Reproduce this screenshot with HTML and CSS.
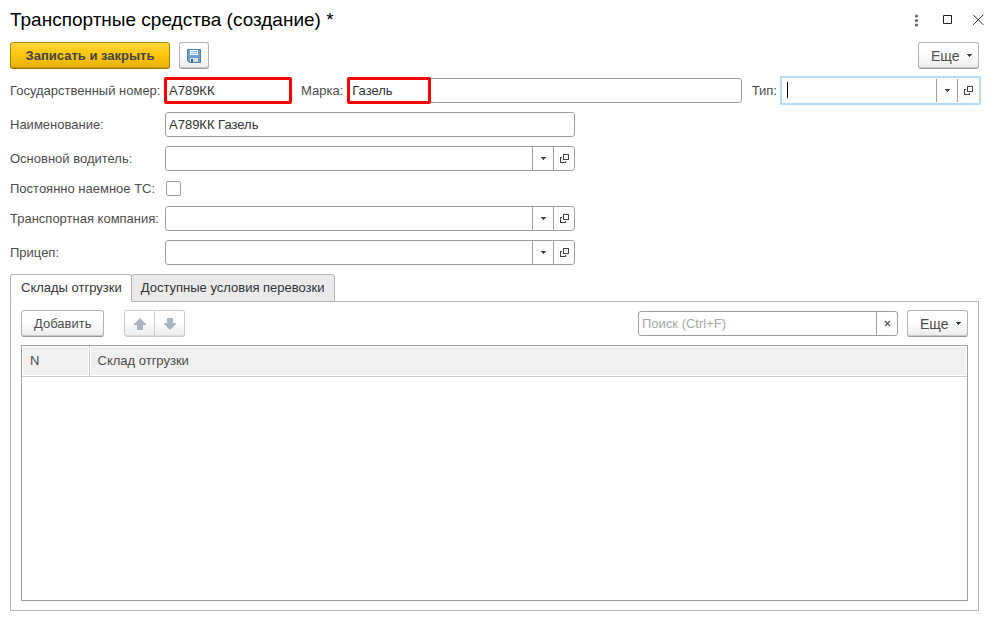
FILE: index.html
```html
<!DOCTYPE html>
<html lang="ru">
<head>
<meta charset="utf-8">
<meta name="viewport" content="width=device-width, initial-scale=1">
<title>Транспортные средства (создание)</title>
<link rel="stylesheet" href="styles.css">
</head>
<body>
<svg class="sprite" aria-hidden="true">
  <symbol id="caret" viewBox="0 0 5 3"><path d="M0 0h5v1H4v1H3v1H2V2H1V1H0z"/></symbol>
  <symbol id="open" viewBox="0 0 9 9"><path d="M3 0h6v6H3zM4 1v4h4V1zM0 3h2v1H1v4h4V7h1v2H0z" fill-rule="evenodd"/></symbol>
</svg>
<header class="titlebar">
  <h1 class="title">Транспортные средства (создание) *</h1>
  <div class="window-controls">
    <button class="window-button" type="button" aria-label="Меню"><svg width="15" height="15" viewBox="0 0 15 15"><g class="dots"><circle cx="7.5" cy="3" r="1.6"/><circle cx="7.5" cy="7.5" r="1.6"/><circle cx="7.5" cy="12" r="1.6"/></g></svg></button>
    <button class="window-button" type="button" aria-label="Развернуть"><svg width="15" height="15" viewBox="0 0 15 15"><path d="M3.5 2.5h8v8h-8z" fill="none" stroke="#222"/></svg></button>
    <button class="window-button" type="button" aria-label="Закрыть"><svg width="15" height="15" viewBox="0 0 15 15"><path d="M2.500 2l9.500 9.500M12 2l-9.500 9.500" fill="none" stroke="#333" stroke-linecap="square"/></svg></button>
  </div>
</header>
<main class="content">
  <div class="toolbar">
    <button class="button primary" type="button">Записать и закрыть</button>
    <button class="button icon-button" type="button" aria-label="Записать"><svg width="14" height="14" viewBox="0 0 14 14"><path d="M.5.5h13v13h-11l-2-2z" fill="#6f9fd0" stroke="#4f7dac"/><path d="M3 1h8v5H3z" fill="#fff"/><path d="M4 2.5h6M4 4.5h6" stroke="#8fb2d2"/><path d="M3 9h8v4H3z" fill="#d5dde0"/><path d="M4 10h2v3H4z" fill="#35608c"/></svg></button>
    <button class="button more push" type="button">Еще<svg width="5" height="3"><use href="#caret"/></svg></button>
  </div>
  <form class="form">
    <div class="row">
      <label class="label" for="number">Государственный номер:</label>
      <div class="field number marked"><input id="number" type="text" value="А789КК"></div>
      <label class="inline-label" for="brand">Марка:</label>
      <div class="field brand marked"><input id="brand" type="text" value="Газель"></div>
      <label class="inline-label" for="type">Тип:</label>
      <div class="field type focused"><input id="type" type="text"><button type="button" aria-label="Выбрать"><svg width="5" height="3"><use href="#caret"/></svg></button><button type="button" aria-label="Открыть"><svg width="9" height="9"><use href="#open"/></svg></button></div>
    </div>
    <div class="row">
      <label class="label" for="name">Наименование:</label>
      <div class="field regular"><input id="name" type="text" value="А789КК Газель"></div>
    </div>
    <div class="row">
      <label class="label" for="driver">Основной водитель:</label>
      <div class="field regular"><input id="driver" type="text"><button type="button" aria-label="Выбрать"><svg width="5" height="3"><use href="#caret"/></svg></button><button type="button" aria-label="Открыть"><svg width="9" height="9"><use href="#open"/></svg></button></div>
    </div>
    <div class="row">
      <label class="label" for="hired">Постоянно наемное ТС:</label>
      <input class="checkbox" id="hired" type="checkbox">
    </div>
    <div class="row">
      <label class="label" for="company">Транспортная компания:</label>
      <div class="field regular"><input id="company" type="text"><button type="button" aria-label="Выбрать"><svg width="5" height="3"><use href="#caret"/></svg></button><button type="button" aria-label="Открыть"><svg width="9" height="9"><use href="#open"/></svg></button></div>
    </div>
    <div class="row">
      <label class="label" for="trailer">Прицеп:</label>
      <div class="field regular"><input id="trailer" type="text"><button type="button" aria-label="Выбрать"><svg width="5" height="3"><use href="#caret"/></svg></button><button type="button" aria-label="Открыть"><svg width="9" height="9"><use href="#open"/></svg></button></div>
    </div>
  </form>
  <div class="tabs" role="tablist">
    <button class="tab active" type="button" role="tab" aria-selected="true">Склады отгрузки</button>
    <button class="tab" type="button" role="tab" aria-selected="false">Доступные условия перевозки</button>
  </div>
  <section class="panel" role="tabpanel">
    <div class="toolbar">
      <button class="button" type="button">Добавить</button>
      <div class="move-group">
        <button class="button" type="button" aria-label="Вверх" disabled><svg width="12" height="12" viewBox="0 0 12 12"><path d="M6 0l6 6v1H9v5H3V7H0V6z"/></svg></button>
        <button class="button" type="button" aria-label="Вниз" disabled><svg width="12" height="12" viewBox="0 0 12 12"><path d="M6 12l6-6V5H9V0H3v5H0v1z"/></svg></button>
      </div>
      <div class="field search push"><input type="text" aria-label="Поиск" placeholder="Поиск (Ctrl+F)"><button type="button" aria-label="Очистить"><svg width="7" height="7" viewBox="0 0 7 7"><path d="M1 1l5 5M6 1L1 6" stroke="#555" stroke-width="1.2"/></svg></button></div>
      <button class="button more" type="button">Еще<svg width="5" height="3"><use href="#caret"/></svg></button>
    </div>
    <div class="grid">
      <table class="table">
        <thead><tr><th class="index" scope="col">N</th><th scope="col">Склад отгрузки</th></tr></thead>
        <tbody></tbody>
      </table>
    </div>
  </section>
</main>
</body>
</html>
```
FILE: styles.css
```css
*, *::before, *::after { box-sizing: border-box; }

body {
  margin: 0;
  min-height: 100vh;
  display: flex;
  flex-direction: column;
  background: #fff;
  color: #4d4d4d;
  font: 13px/16px "Liberation Sans", Arial, sans-serif;
}

button, input { font: inherit; color: inherit; }
button { padding: 0; }
svg { display: block; fill: #444; flex: none; }
.sprite { position: absolute; width: 0; height: 0; }

.titlebar {
  display: flex;
  align-items: center;
  justify-content: space-between;
  padding: 8px 8px 10px 10px;
}

.title {
  margin: 0;
  color: #000;
  font-size: 19px;
  font-weight: 400;
  line-height: 24px;
}

.window-controls { display: flex; gap: 16px; }
.window-button { border: 0; background: none; }
.dots { fill: #666; }

.content {
  flex: 1;
  display: flex;
  flex-direction: column;
  padding: 0 15px 9px 10px;
}

.toolbar { display: flex; align-items: center; gap: 9px; }
.push { margin-left: auto; }

.button {
  display: flex;
  align-items: center;
  justify-content: center;
  height: 27px;
  padding: 0 12px;
  border: 1px solid #b3b3b3;
  border-bottom-color: #999;
  border-radius: 3px;
  background: linear-gradient(#fff 40%, #ececec);
  box-shadow: inset 0 -1px #c8c8c8;
}

.primary {
  min-width: 160px;
  border-color: #b08d00 #a88600 #957600;
  background: linear-gradient(#ffd53d, #fcc70c 45%, #e9b200);
  box-shadow: inset 0 -1px #c49800;
  font-weight: 700;
  color: #444;
}

.icon-button { width: 30px; padding: 0; }
.more { width: 61px; padding: 0 6px 0 12px; justify-content: space-between; font-size: 14px; }

.form {
  display: flex;
  flex-direction: column;
  gap: 9px;
  margin: 9px 0;
}

.row { display: flex; align-items: center; }
.label { width: 155px; white-space: nowrap; }
.inline-label { margin: 0 5px 0 10px; white-space: nowrap; }

.field {
  position: relative;
  display: flex;
  height: 25px;
  border: 1px solid #a0a0a0;
  border-radius: 3px;
  background: #fff;
  color: #333;
}

.field input {
  flex: 1;
  min-width: 0;
  padding: 0 3px;
  border: 0;
  outline: 0;
  background: none;
}

.field input::placeholder { color: #a6a6a6; opacity: 1; }

.field button {
  display: flex;
  align-items: center;
  justify-content: center;
  width: 21px;
  border: 0;
  border-left: 1px solid #a0a0a0;
  background: none;
}

.regular { width: 410px; }
.number { width: 126px; }
.brand { flex: 2; }
.type { width: 197px; }

.focused {
  border-color: #fff;
  border-radius: 0;
  box-shadow: 0 0 0 2px #b8dcf8;
}

.focused::before {
  content: "";
  position: absolute;
  left: 4px;
  top: 3px;
  width: 1px;
  height: 16px;
  background: #000;
}

.marked::after {
  content: "";
  position: absolute;
  inset: -2px;
  border: 3px solid #f00;
  border-radius: 2px;
  pointer-events: none;
}

.brand::after { right: auto; width: 84px; }

.checkbox {
  appearance: none;
  width: 15px;
  height: 15px;
  margin: 1px;
  border: 1px solid #a0a0a0;
  border-radius: 2px;
}

.tabs { display: flex; margin-bottom: -1px; }

.tab {
  height: 28px;
  padding: 0 9px;
  border: 1px solid #b3b3b3;
  border-radius: 3px 3px 0 0;
  background: #eaeaea;
  color: #333;
}

.tab + .tab { margin-left: -1px; }
.tab.active { padding-left: 10px; border-bottom-color: #fff; background: #fff; z-index: 1; }

.panel {
  flex: 1;
  display: flex;
  flex-direction: column;
  gap: 8px;
  padding: 8px 10px 9px;
  border: 1px solid #b3b3b3;
}

.move-group { display: flex; margin-left: 11px; }
.move-group .button { width: 30px; padding: 0; border-color: #ccc; box-shadow: inset 0 -1px #ddd; }
.move-group .button:first-child { width: 31px; border-radius: 3px 0 0 3px; }
.move-group .button:last-child { border-left: 0; border-radius: 0 3px 3px 0; }
.move-group svg { fill: #a9b6be; }

.search { width: 260px; }

.grid { flex: 1; border: 1px solid #a0a0a0; }

.table { width: 100%; border-collapse: collapse; }

.table th {
  height: 30px;
  padding: 0 8px;
  border-bottom: 1px solid #ccc;
  background: #f0f0f0;
  box-shadow: inset 0 0 0 1px #fff;
  font-weight: 400;
  text-align: left;
}

.table .index { width: 67px; border-right: 1px solid #ccc; }
```
